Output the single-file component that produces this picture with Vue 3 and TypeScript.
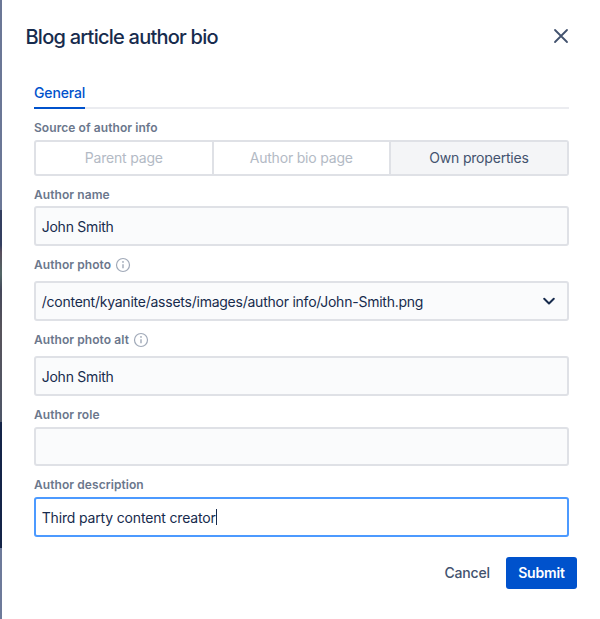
<script setup lang="ts">
import { ref } from 'vue'

interface Field {
  id: string
  label: string
  value: string
  hint?: boolean
  picker?: boolean
  focused?: boolean
}

const sources: string[] = ['Parent page', 'Author bio page', 'Own properties']
const selected = ref<string>('Own properties')

const fields: Field[] = [
  { id: 'name', label: 'Author name', value: 'John Smith' },
  { id: 'photo', label: 'Author photo', value: '/content/kyanite/assets/images/author info/John-Smith.png', hint: true, picker: true },
  { id: 'alt', label: 'Author photo alt', value: 'John Smith', hint: true },
  { id: 'role', label: 'Author role', value: '' },
  { id: 'description', label: 'Author description', value: 'Third party content creator', focused: true },
]
</script>

<template>
  <div class="screen">
    <div class="backdrop"></div>
    <main class="dialog">
      <header class="header">
        <h1 class="title">Blog article author bio</h1>
        <svg class="close" width="16" height="16" viewBox="0 0 16 16">
          <path d="M2 2L14 14M14 2L2 14" />
        </svg>
      </header>

      <section class="body">
        <nav class="tabs"><span class="tab">General</span></nav>

        <div class="field">
          <div class="label">Source of author info</div>
          <div class="segments">
            <div
              v-for="source in sources"
              :key="source"
              class="segment"
              :class="{ active: source === selected }"
              @click="selected = source"
            ><span>{{ source }}</span></div>
          </div>
        </div>

        <div v-for="field in fields" :key="field.id" class="field" :class="field.id">
          <div class="label" :class="{ hinted: field.hint }">
            <span>{{ field.label }}</span>
            <svg v-if="field.hint" class="info" width="16" height="16" viewBox="0 0 16 16">
              <circle class="ring" cx="8" cy="8" r="6.5" />
              <circle class="dot" cx="8" cy="4.9" r="0.9" />
              <path class="stem" d="M8 7.2V11.3" />
            </svg>
          </div>
          <div class="control" :class="{ focused: field.focused }">
            <span class="value">{{ field.value }}</span>
            <span v-if="field.focused" class="caret"></span>
            <svg v-if="field.picker" class="chevron" width="14" height="10" viewBox="0 0 14 10">
              <path d="M2.2 2.8L7 7.5L11.8 2.8" />
            </svg>
          </div>
        </div>
      </section>

      <footer class="footer">
        <span class="cancel">Cancel</span>
        <span class="submit"><span>Submit</span></span>
      </footer>
    </main>
  </div>
</template>

<style>
body {
  margin: 0;
  background: #fff;
}
</style>

<style scoped>
.screen {
  display: flex;
  width: 600px;
  height: 619px;
  overflow: hidden;
  background: #fff;
  color: #172b4d;
  font-family: Inter, "Liberation Sans", sans-serif;
  font-size: 14px;
}
.backdrop {
  width: 2px;
  flex: none;
  background: linear-gradient(#6b7796 0 210px, #343f60 210px 245px, #594e5d 252px, #526766 274px, #45485b 290px, #58545b 330px, #4e5668 422px, #142448 422px 548px, #6d7a9a 548px);
}
.dialog {
  flex: 1;
}
.header {
  display: flex;
  align-items: center;
  justify-content: space-between;
  height: 72px;
  padding: 0 31px 0 23.5px;
}
.title {
  margin: 0;
  padding-top: 2px;
  font-size: 20px;
  line-height: 24px;
  font-weight: 500;
  letter-spacing: -0.76px;
}
.close {
  fill: none;
  stroke: #42526e;
  stroke-width: 1.8;
  stroke-linecap: round;
}
.body {
  width: 535px;
  padding: 7px 0 0 32px;
}
.tabs {
  display: flex;
  height: 28px;
  border-bottom: 2px solid #ebecf0;
}
.tab {
  height: 28px;
  line-height: 28px;
  border-bottom: 2px solid #0052cc;
  color: #0052cc;
  font-weight: 500;
  letter-spacing: -0.15px;
}
.field {
  padding-top: 11px;
}
.label {
  display: flex;
  align-items: center;
  gap: 4px;
  height: 16px;
  margin-bottom: 4px;
  color: #6b778c;
  font-size: 12px;
  line-height: 16px;
  font-weight: 600;
  letter-spacing: 0.07px;
}
.label.hinted {
  margin-bottom: 8px;
}
.name .label {
  margin-bottom: 3px;
}
.info {
  fill: none;
  stroke: #a0a9b8;
}
.ring {
  stroke-width: 1.2;
}
.dot {
  fill: #a0a9b8;
  stroke: none;
}
.stem {
  stroke-width: 1.4;
}
.segments {
  display: grid;
  grid-template-columns: 177.5px 177.5px 176px;
  height: 36px;
  box-sizing: border-box;
  border: 2px solid #dfe1e6;
  border-radius: 3px;
  overflow: hidden;
}
.segment {
  display: flex;
  align-items: center;
  justify-content: center;
  box-sizing: border-box;
  padding-bottom: 2px;
  border-right: 2px solid #dfe1e6;
  color: #b3bac5;
  letter-spacing: -0.19px;
}
.segment:last-child {
  border-right: 0;
}
.segment.active {
  background: #f4f5f7;
  color: #42526e;
}
.control {
  display: flex;
  align-items: center;
  box-sizing: border-box;
  height: 40px;
  padding: 0 11px 0 5.7px;
  border: 2px solid #dfe1e6;
  border-radius: 3px;
  background: #fafbfc;
}
.role .control {
  height: 39px;
}
.control.focused {
  border-color: #4c9aff;
  background: #fff;
}
.value {
  padding-top: 2px;
  line-height: 20px;
  letter-spacing: -0.24px;
}
.description .value {
  letter-spacing: -0.16px;
}
.caret {
  width: 1px;
  height: 16px;
  background: #172b4d;
}
.chevron {
  margin-left: auto;
  fill: none;
  stroke: #172b4d;
  stroke-width: 2;
  stroke-linecap: round;
  stroke-linejoin: round;
}
.footer {
  display: flex;
  align-items: center;
  justify-content: flex-end;
  gap: 16px;
  padding: 20px 23px 0 0;
  color: #42526e;
  font-weight: 500;
}
.cancel {
  padding-bottom: 2px;
  letter-spacing: -0.15px;
}
.submit {
  display: flex;
  align-items: center;
  justify-content: center;
  box-sizing: border-box;
  width: 71px;
  height: 32px;
  padding-bottom: 2px;
  border-radius: 3px;
  background: #0052cc;
  color: #fff;
  font-weight: 600;
  letter-spacing: -0.15px;
}
</style>
